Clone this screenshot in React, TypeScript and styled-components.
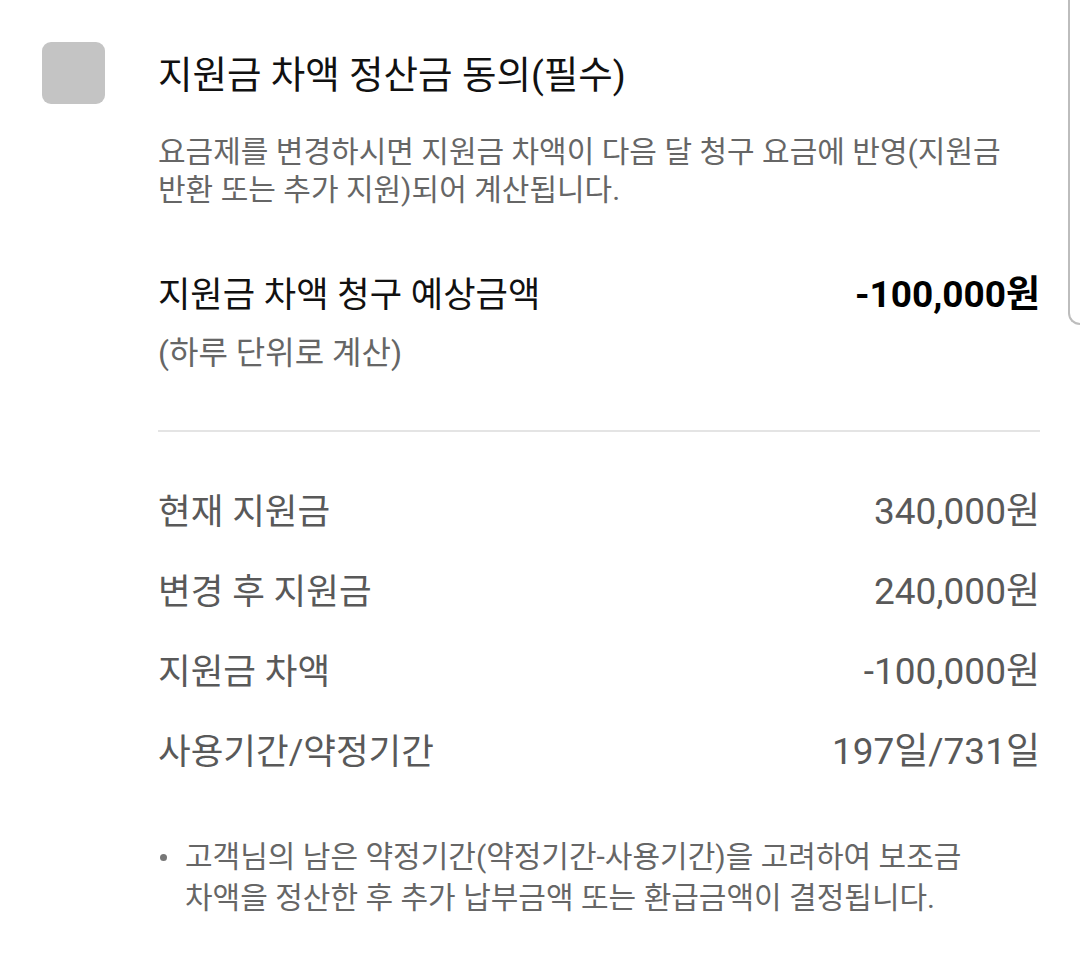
import styled, { createGlobalStyle } from 'styled-components';

const GlobalStyle = createGlobalStyle`
    html, body {
        margin: 0;
        padding: 0;
        background: #ffffff;
    }
    body {
        font-family: Roboto, "Noto Sans CJK KR", "Noto Sans", sans-serif;
        -webkit-font-smoothing: antialiased;
    }
`;

const Page = styled.div`
    position: relative;
    width: 1080px;
    height: 965px;
    overflow: hidden;
    display: grid;
    grid-template-columns: 63px 1fr;
    align-items: start;
    column-gap: 53px;
    padding: 42px 40px 0 42px;
    box-sizing: border-box;
`;

const Checkbox = styled.div`
    width: 63px;
    height: 62px;
    border-radius: 9px;
    background: #c4c4c4;
`;

const Content = styled.div`
    display: flex;
    flex-direction: column;
`;

const Title = styled.h1`
    margin: 11px 0 0;
    font-size: 37.5px;
    line-height: 44px;
    font-weight: 400;
    color: #111;
`;

const Description = styled.p`
    margin: 36px 0 0;
    font-size: 30px;
    line-height: 38px;
    color: #666;
`;

const EstimateRow = styled.div`
    display: flex;
    justify-content: space-between;
    align-items: baseline;
    margin-top: 64px;
    height: 44px;
`;

const EstimateLabel = styled.span`
    font-size: 35.2px;
    line-height: 44px;
    color: #111;
`;

const EstimateValue = styled.span`
    font-size: 37px;
    line-height: 44px;
    font-weight: 700;
    color: #000;
`;

const Note = styled.div`
    margin-top: 16px;
    font-size: 32px;
    line-height: 40px;
    color: #666;
`;

const Divider = styled.hr`
    margin: 57px 0 0;
    border: none;
    height: 2px;
    background: #e4e4e4;
`;

const DetailList = styled.dl`
    margin: 58px 0 0;
    display: flex;
    flex-direction: column;
    gap: 36px;
`;

const DetailRow = styled.div`
    display: flex;
    justify-content: space-between;
    align-items: baseline;
    height: 44px;
    line-height: 44px;
    color: #595959;
`;

const DetailLabel = styled.dt`
    margin: 0;
    font-size: 35.5px;
`;

const DetailValue = styled.dd`
    margin: 0;
    font-size: 37px;
`;

const Bullets = styled.ul`
    margin: 62px 0 0;
    padding: 0 0 0 27px;
    font-size: 30px;
    line-height: 41px;
    color: #666;
    list-style: none;
`;

const Bullet = styled.li`
    position: relative;

    &::before {
        content: '';
        position: absolute;
        left: -25px;
        top: 18px;
        width: 7px;
        height: 7px;
        border-radius: 50%;
        background: #777;
    }
`;

const ScrollEdge = styled.div`
    position: absolute;
    top: -20px;
    right: -20px;
    width: 30px;
    height: 343px;
    border-left: 2px solid #bdbdbd;
    border-bottom: 2px solid #bdbdbd;
    border-bottom-left-radius: 12px;
`;

const details = [
    { label: '현재 지원금', value: '340,000원' },
    { label: '변경 후 지원금', value: '240,000원' },
    { label: '지원금 차액', value: '-100,000원' },
    { label: '사용기간/약정기간', value: '197일/731일' },
];

export default function App() {
    return (
        <>
            <GlobalStyle />
            <Page>
                <Checkbox />
                <Content>
                    <Title>지원금 차액 정산금 동의(필수)</Title>
                    <Description>
                        요금제를 변경하시면 지원금 차액이 다음 달 청구 요금에 반영(지원금
                        <br />
                        반환 또는 추가 지원)되어 계산됩니다.
                    </Description>
                    <EstimateRow>
                        <EstimateLabel>지원금 차액 청구 예상금액</EstimateLabel>
                        <EstimateValue>-100,000원</EstimateValue>
                    </EstimateRow>
                    <Note>(하루 단위로 계산)</Note>
                    <Divider />
                    <DetailList>
                        {details.map(d => (
                            <DetailRow key={d.label}>
                                <DetailLabel>{d.label}</DetailLabel>
                                <DetailValue>{d.value}</DetailValue>
                            </DetailRow>
                        ))}
                    </DetailList>
                    <Bullets>
                        <Bullet>
                            고객님의 남은 약정기간(약정기간-사용기간)을 고려하여 보조금
                            <br />
                            차액을 정산한 후 추가 납부금액 또는 환급금액이 결정됩니다.
                        </Bullet>
                    </Bullets>
                </Content>
                <ScrollEdge />
            </Page>
        </>
    );
}
